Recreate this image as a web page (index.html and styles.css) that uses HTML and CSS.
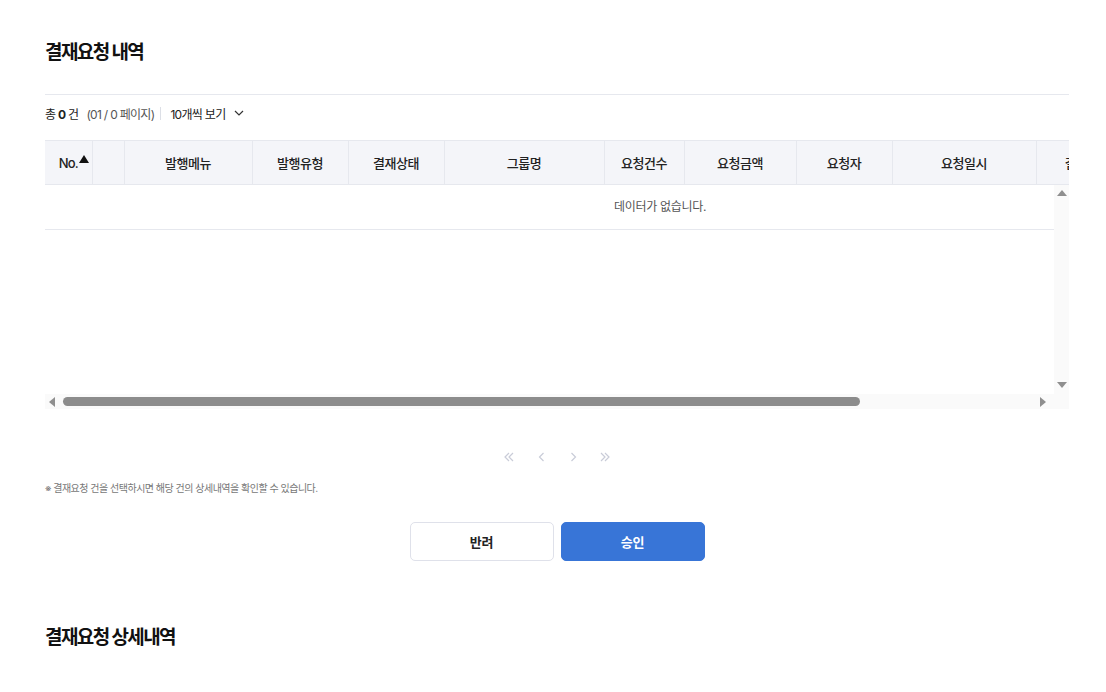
FILE: index.html
```html
<!DOCTYPE html>
<html lang="ko">
<head>
    <meta charset="UTF-8">
    <meta name="viewport" content="width=device-width, initial-scale=1.0">
    <title>결재요청 내역</title>
    <link rel="stylesheet" href="styles.css">
</head>
<body>
    <div class="page">
        <h2 class="title">결재요청 내역</h2>
        <div class="divider"></div>

        <div class="summary">
            <span class="total">총 <b>0</b> 건</span>
            <span class="pageInfo">(01 / 0 페이지)</span>
            <span class="sep"></span>
            <span class="perPage">10개씩 보기
                <svg width="10" height="6" viewBox="0 0 10 6"><path d="M1 1 L5 5 L9 1" fill="none" stroke="#333" stroke-width="1.2"/></svg>
            </span>
        </div>

        <div class="grid">
            <div class="gridHead">
                <table>
                    <colgroup>
                        <col style="width:47px"><col style="width:32px"><col style="width:128px">
                        <col style="width:96px"><col style="width:96px"><col style="width:160px">
                        <col style="width:80px"><col style="width:112px"><col style="width:96px">
                        <col style="width:144px"><col style="width:92px"><col style="width:147px">
                    </colgroup>
                    <tr>
                        <th class="noCol">No.<span class="sortUp"></span></th>
                        <th></th>
                        <th>발행메뉴</th>
                        <th>발행유형</th>
                        <th>결재상태</th>
                        <th>그룹명</th>
                        <th>요청건수</th>
                        <th>요청금액</th>
                        <th>요청자</th>
                        <th>요청일시</th>
                        <th>결재자</th>
                        <th>결재일시</th>
                    </tr>
                </table>
            </div>
            <div class="gridBody">
                <div class="gridView">
                    <div class="emptyRow">데이터가 없습니다.</div>
                </div>
                <div class="vScroll">
                    <span class="arrow up"></span>
                    <span class="arrow down"></span>
                </div>
            </div>
            <div class="hScroll">
                <span class="arrow left"></span>
                <div class="hTrack"><div class="hThumb"></div></div>
                <span class="arrow right"></span>
                <span class="corner"></span>
            </div>
        </div>

        <div class="paging">
            <a class="pageBtn"><svg width="12" height="10" viewBox="0 0 12 10"><path d="M6 1 L2 5 L6 9 M10 1 L6 5 L10 9" fill="none" stroke="#c9ccd8" stroke-width="1.2"/></svg></a>
            <a class="pageBtn"><svg width="7" height="10" viewBox="0 0 7 10"><path d="M5.5 1 L1.5 5 L5.5 9" fill="none" stroke="#c9ccd8" stroke-width="1.2"/></svg></a>
            <a class="pageBtn"><svg width="7" height="10" viewBox="0 0 7 10"><path d="M1.5 1 L5.5 5 L1.5 9" fill="none" stroke="#c9ccd8" stroke-width="1.2"/></svg></a>
            <a class="pageBtn"><svg width="12" height="10" viewBox="0 0 12 10"><path d="M2 1 L6 5 L2 9 M6 1 L10 5 L6 9" fill="none" stroke="#c9ccd8" stroke-width="1.2"/></svg></a>
        </div>

        <p class="note">※ 결재요청 건을 선택하시면 해당 건의 상세내역을 확인할 수 있습니다.</p>

        <div class="btnArea">
            <button class="btn btnLine">반려</button>
            <button class="btn btnBlue">승인</button>
        </div>

        <h2 class="title title2">결재요청 상세내역</h2>
    </div>
</body>
</html>
```

FILE: styles.css
```css
html,body {
    margin: 0;
    background: #fff;
}
body {
    font-family: "Inter", "Noto Sans CJK KR", sans-serif;
    color: #222;
}
.page {
    width: 1024px;
    margin-left: 45px;
    padding-top: 39px;
}
.title {
    margin: 0;
    font-size: 19px;
    line-height: 28px;
    font-weight: 700;
    letter-spacing: -1.6px;
    color: #111;
}
.divider {
    margin-top: 27px;
    border-top: 1px solid #e6e8ee;
}

/* summary */
.summary {
    display: flex;
    align-items: center;
    height: 26px;
    margin-top: 5px;
    margin-bottom: 14px;
    font-size: 12px;
    letter-spacing: -0.7px;
}
.total b {
    font-weight: 700;
}
.pageInfo {
    margin-left: 8px;
    color: #555;
}
.sep {
    width: 1px;
    height: 13px;
    background: #dcdfe6;
    margin: 0 9px 0 6px;
}
.perPage {
    display: flex;
    align-items: center;
    gap: 9px;
}

/* grid */
.grid {
    width: 1024px;
}
.gridHead {
    overflow: hidden;
    border-top: 1px solid #e6e8ee;
    border-bottom: 1px solid #e6e8ee;
    background: #f4f5f9;
}
.gridHead table {
    border-collapse: collapse;
    table-layout: fixed;
    width: 1230px;
}
.gridHead th {
    height: 43px;
    padding: 0;
    font-size: 13px;
    font-weight: 500;
    letter-spacing: -0.4px;
    color: #222;
    border-left: 1px solid #e6e8ee;
    white-space: nowrap;
}
.gridHead th:first-child {
    border-left: 0;
}
.gridHead th.noCol {
    padding-left: 11px;
    letter-spacing: -0.8px;
}
.sortUp {
    display: inline-block;
    width: 0;
    height: 0;
    border-left: 5px solid transparent;
    border-right: 5px solid transparent;
    border-bottom: 8px solid #111;
    margin-left: 1px;
    vertical-align: 5px;
}
.gridBody {
    display: flex;
    height: 209px;
}
.gridView {
    flex: 1;
    overflow: hidden;
}
.emptyRow {
    width: 1230px;
    height: 44px;
    line-height: 44px;
    text-align: center;
    font-size: 12px;
    color: #555;
    border-bottom: 1px solid #e6e8ee;
    letter-spacing: -0.3px;
}
.vScroll {
    width: 15px;
    flex: none;
    background: #fafafa;
    display: flex;
    flex-direction: column;
    justify-content: space-between;
    align-items: center;
    padding: 5px 0 6px;
    box-sizing: border-box;
}
.hScroll {
    display: flex;
    align-items: center;
    height: 15px;
    background: #fafafa;
}
.hTrack {
    width: 979px;
    padding-left: 3px;
    box-sizing: border-box;
}
.hThumb {
    width: 797px;
    height: 9px;
    border-radius: 5px;
    background: #8c8c8c;
}
.corner {
    width: 15px;
    height: 15px;
}
.arrow {
    width: 0;
    height: 0;
    display: block;
}
.arrow.up {
    border-left: 5px solid transparent;
    border-right: 5px solid transparent;
    border-bottom: 6px solid #8f8f8f;
}
.arrow.down {
    border-left: 5px solid transparent;
    border-right: 5px solid transparent;
    border-top: 6px solid #8f8f8f;
}
.arrow.left {
    margin-left: 4px;
    margin-right: 5px;
    border-top: 5px solid transparent;
    border-bottom: 5px solid transparent;
    border-right: 6px solid #8f8f8f;
}
.arrow.right {
    margin-left: 1px;
    margin-right: 4px;
    border-top: 5px solid transparent;
    border-bottom: 5px solid transparent;
    border-left: 6px solid #8f8f8f;
}

/* paging */
.paging {
    display: flex;
    justify-content: center;
    margin-top: 32px;
    height: 32px;
}
.pageBtn {
    width: 32px;
    display: flex;
    align-items: center;
    justify-content: center;
}
.note {
    margin: 7px 0 0;
    font-size: 10px;
    line-height: 16px;
    color: #777;
    letter-spacing: -0.5px;
}
.btnArea {
    display: flex;
    justify-content: center;
    gap: 7px;
    margin-top: 26px;
}
.btn {
    width: 144px;
    height: 39px;
    border-radius: 5px;
    font-family: inherit;
    font-size: 13px;
    font-weight: 700;
    letter-spacing: -0.3px;
}
.btnLine {
    background: #fff;
    border: 1px solid #dfe1ea;
    color: #222;
}
.btnBlue {
    background: #3875d7;
    border: 1px solid #3875d7;
    color: #fff;
}
.title2 {
    margin-top: 63px;
}
```
